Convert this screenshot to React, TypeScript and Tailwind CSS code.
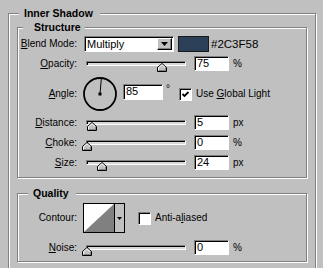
import React from "react";

function Legend({ className, children }: { className: string; children: React.ReactNode }) {
  return (
    <div
      className={`absolute -top-[7px] h-[13px] bg-[#c0c0c0] text-[10.5px] font-bold leading-[13px] ${className}`}
    >
      {children}
    </div>
  );
}

function Label({ children }: { children: React.ReactNode }) {
  return <div className="w-[59px] shrink-0 text-right text-[10px] leading-[12px]">{children}</div>;
}

function Thumb({ pos }: { pos: number }) {
  return (
    <svg
      className="absolute top-[1px]"
      style={{ left: pos - 5 }}
      width="10"
      height="9"
      viewBox="0 0 10 9"
    >
      <polygon points="0.5,4.5 5,0.5 9.5,4.5 9.5,8.5 0.5,8.5" fill="#c0c0c0" stroke="#000" strokeWidth="1" />
      <polyline points="1.5,8 1.5,4.8 5,1.8 8,4.5" fill="none" stroke="#fff" strokeWidth="1" />
      <polyline points="8.5,4.9 8.5,7.5 1.5,7.5" fill="none" stroke="#808080" strokeWidth="1" />
    </svg>
  );
}

function Slider({ pos }: { pos: number }) {
  return (
    <div className="relative ml-[9px] h-[5px] w-[100px] shrink-0 border border-t-[#808080] border-l-[#808080] border-b-white border-r-white bg-[#d8d8d8] shadow-[inset_1px_1px_0_#000]">
      <Thumb pos={pos} />
    </div>
  );
}

function Input({ value, className = "" }: { value: string; className?: string }) {
  return (
    <div
      className={`flex h-[15px] shrink-0 items-center border border-t-[#808080] border-l-[#808080] border-b-white border-r-white bg-white pl-[2px] text-[11px] leading-[13px] shadow-[inset_1px_1px_0_#000] ${className}`}
    >
      {value}
    </div>
  );
}

function SliderRow({
  label,
  pos,
  value,
  unit,
  className,
}: {
  label: React.ReactNode;
  pos: number;
  value: string;
  unit: string;
  className: string;
}) {
  return (
    <div className={`flex h-[15px] items-center ${className}`}>
      <Label>{label}</Label>
      <Slider pos={pos} />
      <Input value={value} className="ml-[8px] w-[35px]" />
      <div className="ml-[4px] text-[10px] leading-[12px]">{unit}</div>
    </div>
  );
}

function Checkbox({ checked, className }: { checked: boolean; className: string }) {
  return (
    <div
      className={`relative h-[13px] w-[13px] shrink-0 border border-t-[#808080] border-l-[#808080] border-b-white border-r-white bg-white shadow-[inset_1px_1px_0_#000] ${className}`}
    >
      {checked && (
        <svg className="absolute left-[1px] top-[1px]" width="9" height="9" viewBox="0 0 9 9">
          <path d="M1.5 4 L3.5 6 L7.5 2" fill="none" stroke="#000" strokeWidth="1.8" />
        </svg>
      )}
    </div>
  );
}

function Dial() {
  const a = (85 * Math.PI) / 180;
  const cx = 17;
  const cy = 17;
  return (
    <svg className="ml-[6px] shrink-0" width="35" height="35" viewBox="0 0 35 35">
      <circle cx={cx} cy={cy} r="16" fill="none" stroke="#000" strokeWidth="1.8" />
      <line x1={cx} y1={cy} x2={cx + 15 * Math.cos(a)} y2={cy - 15 * Math.sin(a)} stroke="#000" strokeWidth="1" />
      <rect x={cx - 1.5} y={cy - 1.5} width="3" height="3" fill="#000" />
    </svg>
  );
}

export default function App() {
  return (
    <div className="h-[268px] w-[323px] overflow-hidden bg-[#c0c0c0] pl-[8px] pt-[13px] font-['Liberation_Sans',Arial,sans-serif] text-black">
      <div className="relative h-[300px] w-[308px] border border-[#808080] pl-[8px] pt-[13px] shadow-[inset_1px_1px_0_#fff,1px_1px_0_#fff]">
        <Legend className="left-[10px] pl-[5px] pr-[7px]">Inner Shadow</Legend>

        {/* Structure */}
        <div className="relative h-[151px] w-[290px] border border-[#808080] pt-[8px] shadow-[inset_1px_1px_0_#fff,1px_1px_0_#fff]">
          <Legend className="left-[5px] pl-[11px] pr-[4px]">Structure</Legend>

          <div className="flex h-[16px] items-center">
            <Label>
              <u>B</u>lend Mode:
            </Label>
            <div className="relative ml-[7px] flex h-[16px] w-[90px] shrink-0 items-center border border-t-[#808080] border-l-[#808080] border-b-white border-r-white bg-white pl-[2px] text-[11px] leading-[13px] shadow-[inset_1px_1px_0_#000]">
              Multiply
              <div className="absolute right-[1px] top-[1px] flex h-[12px] w-[15px] items-center justify-center border border-t-white border-l-white border-b-black border-r-black bg-[#c0c0c0] shadow-[inset_-1px_-1px_0_#808080]">
                <svg width="7" height="4" viewBox="0 0 7 4">
                  <polygon points="0,0 7,0 3.5,4" fill="#000" />
                </svg>
              </div>
            </div>
            <div className="ml-[4px] h-[16px] w-[31px] shrink-0 border border-[#1a1a1a] bg-[#2C3F58]" />
            <div className="ml-[2px] text-[11.5px] leading-[14px]">#2C3F58</div>
          </div>

          <SliderRow
            className="mt-[4px]"
            label={
              <>
                <u>O</u>pacity:
              </>
            }
            pos={75}
            value="75"
            unit="%"
          />

          <div className="mt-[6px] flex h-[34px] items-center">
            <Label>
              <u>A</u>ngle:
            </Label>
            <Dial />
            <Input value="85" className="ml-[5px] mb-[5px] h-[16px] w-[40px]" />
            <div className="mb-[10px] w-[16px] shrink-0 pl-[3px] text-[10px] leading-[12px]">°</div>
            <Checkbox checked className="" />
            <div className="ml-[4px] text-[10px] leading-[12px]">
              Use <u>G</u>lobal Light
            </div>
          </div>

          <SliderRow
            className="mt-[4px]"
            label={
              <>
                <u>D</u>istance:
              </>
            }
            pos={5}
            value="5"
            unit="px"
          />
          <SliderRow
            className="mt-[5px]"
            label={
              <>
                <u>C</u>hoke:
              </>
            }
            pos={0}
            value="0"
            unit="%"
          />
          <SliderRow
            className="mt-[5px]"
            label={
              <>
                <u>S</u>ize:
              </>
            }
            pos={15}
            value="24"
            unit="px"
          />
        </div>

        {/* Quality */}
        <div className="relative mt-[15px] h-[69px] w-[290px] border border-[#808080] pt-[9px] shadow-[inset_1px_1px_0_#fff,1px_1px_0_#fff]">
          <Legend className="left-[10px] pl-[5px] pr-[7px]">Quality</Legend>

          <div className="flex h-[30px] items-center">
            <Label>Contour:</Label>
            <div className="ml-[6px] flex h-[30px] w-[42px] shrink-0 border border-black">
              <svg width="30" height="28" viewBox="0 0 30 28" className="shrink-0">
                <polygon points="0,0 30,0 0,28" fill="#fff" />
                <polygon points="30,0 30,28 0,28" fill="#808080" />
              </svg>
              <div className="flex w-[10px] items-center justify-center border-l border-black bg-[#c0c0c0]">
                <svg width="5" height="3" viewBox="0 0 5 3">
                  <polygon points="0,0 5,0 2.5,3" fill="#000" />
                </svg>
              </div>
            </div>
            <Checkbox checked={false} className="ml-[13px]" />
            <div className="ml-[4px] text-[10px] leading-[12px]">
              Anti-a<u>l</u>iased
            </div>
          </div>

          <SliderRow
            className="mt-[7px]"
            label={
              <>
                <u>N</u>oise:
              </>
            }
            pos={0}
            value="0"
            unit="%"
          />
        </div>
      </div>
    </div>
  );
}
